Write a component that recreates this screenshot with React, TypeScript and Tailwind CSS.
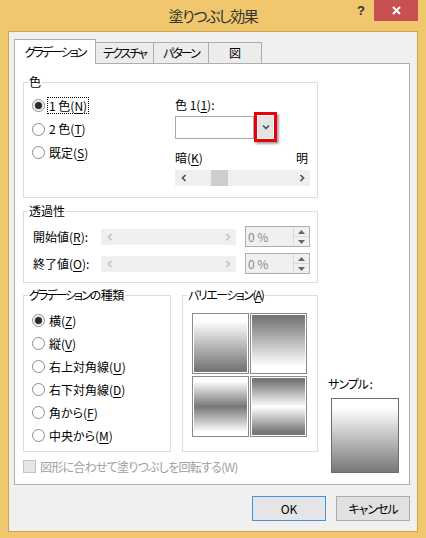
import React from 'react';

const jp = "font-['Noto_Sans_CJK_JP',sans-serif] [font-feature-settings:'palt']";

function Chevron({ dir, color = '#555' }: { dir: 'left' | 'right' | 'down' | 'up'; color?: string }) {
  const pts: Record<string, string> = {
    left: '4.5,1 1.5,4 4.5,7',
    right: '1.5,1 4.5,4 1.5,7',
    down: '1,1.5 4,4.5 7,1.5',
    up: '1,4.5 4,1.5 7,4.5',
  };
  const horiz = dir === 'left' || dir === 'right';
  return (
    <svg width={horiz ? 6 : 8} height={horiz ? 8 : 6} viewBox={horiz ? '0 0 6 8' : '0 0 8 6'}>
      <polyline points={pts[dir]} fill="none" stroke={color} strokeWidth="1.7" />
    </svg>
  );
}

function GroupBox({ label, className, children }: { label: React.ReactNode; className: string; children?: React.ReactNode }) {
  return (
    <div className={`relative border border-[#dcdcdc] ${className}`}>
      <span className="absolute left-[4px] -top-[9px] bg-white px-[1px] leading-[16px] whitespace-nowrap">{label}</span>
      {children}
    </div>
  );
}

function Radio({ checked, focus, children, h = 'h-[23px]' }: { checked?: boolean; focus?: boolean; children: React.ReactNode; h?: string }) {
  return (
    <div className={`flex items-center ${h}`}>
      <span className="w-[13px] h-[13px] rounded-full border border-[#8a8a8a] bg-white flex items-center justify-center shrink-0">
        {checked && <span className="w-[7px] h-[7px] rounded-full bg-[#2a2a2a] ring-1 ring-[#d8d8d8]" />}
      </span>
      {focus ? (
        <span className="ml-[2px] px-[1px] border border-dotted border-black leading-[15px]">{children}</span>
      ) : (
        <span className="ml-[4px] leading-[16px] whitespace-nowrap">{children}</span>
      )}
    </div>
  );
}

function U({ children }: { children: React.ReactNode }) {
  return <span className="underline underline-offset-2">{children}</span>;
}

function ScrollBar({ disabled }: { disabled?: boolean }) {
  const c = disabled ? '#c2c2c2' : '#555';
  return (
    <div className="w-[135px] h-[16px] bg-[#efefef] flex items-center">
      <div className="w-[17px] h-full flex items-center justify-center">
        <Chevron dir="left" color={c} />
      </div>
      <div className="flex-1 h-full">
        {!disabled && <div className="ml-[19px] w-[17px] h-full bg-[#cdcdcd]" />}
      </div>
      <div className="w-[17px] h-full flex items-center justify-center">
        <Chevron dir="right" color={c} />
      </div>
    </div>
  );
}

function Spin() {
  return (
    <div className="ml-[9px] w-[65px] h-[21px] border border-[#adadad] bg-[#f0f0f0] flex">
      <div className="flex-1 pl-[2px] flex items-center text-[#8b8b8b] leading-[16px]">0 %</div>
      <div className="w-[16px] flex flex-col border-l border-[#dadada]">
        <div className="flex-1 flex items-center justify-center border-b border-[#dadada]">
          <svg width="7" height="4" viewBox="0 0 7 4"><polygon points="0,4 3.5,0 7,4" fill="#666" /></svg>
        </div>
        <div className="flex-1 flex items-center justify-center">
          <svg width="7" height="4" viewBox="0 0 7 4"><polygon points="0,0 3.5,4 7,0" fill="#666" /></svg>
        </div>
      </div>
    </div>
  );
}

function Variant({ bg }: { bg: string }) {
  return (
    <div className="h-[61px] border border-[#8a8a8a] bg-white p-[1px]">
      <div className={`w-full h-full ${bg}`} />
    </div>
  );
}

export default function App() {
  return (
    <div className={`w-[426px] h-[538px] bg-[#f0c76c] flex flex-col text-[12px] text-black ${jp}`}>
      {/* title bar */}
      <div className="relative h-[31px] flex items-center justify-center">
        <span className="text-[15px] text-[#333] leading-[20px] tracking-[-1.4px]">塗りつぶし効果</span>
        <div className="absolute top-0 right-[8px] flex">
          <div className="w-[26px] h-[21px] flex items-center justify-center text-[13px] font-bold text-[#333] font-['Liberation_Sans',sans-serif]">?</div>
          <div className="w-[44px] h-[21px] bg-[#c75050] flex items-center justify-center">
            <svg width="9" height="9" viewBox="0 0 9 9">
              <path d="M1 1 L8 8 M8 1 L1 8" stroke="#fff" strokeWidth="2" />
            </svg>
          </div>
        </div>
      </div>

      {/* client area */}
      <div className="mx-[8px] h-[501px] border border-[#c9a54f] bg-[#f0f0f0]">
        {/* tabs */}
        <div className="flex items-end h-[24px] ml-[5px] mt-[7px] tracking-[-2px]">
          <div className="relative z-10 -mb-px h-[25px] w-[82px] border border-b-0 border-[#adadad] bg-white flex items-center justify-center">
            グラデーション
          </div>
          <div className="-ml-px h-[21px] w-[59px] border border-b-0 border-[#adadad] bg-[#ececec] flex items-center justify-center">テクスチャ</div>
          <div className="-ml-px h-[21px] w-[56px] border border-b-0 border-[#adadad] bg-[#ececec] flex items-center justify-center">パターン</div>
          <div className="-ml-px h-[21px] w-[54px] border border-b-0 border-[#adadad] bg-[#ececec] flex items-center justify-center tracking-normal">図</div>
        </div>

        {/* panel */}
        <div className="ml-[5px] w-[396px] h-[422px] border border-[#adadad] bg-white pl-[8px] pt-[18px]">
          <div className="flex items-end">
            <div className="w-[295px]">
              {/* color */}
              <GroupBox label="色" className="h-[116px] flex">
                <div className="w-[151px] pl-[8px] pt-[11px]">
                  <Radio checked focus h="h-[23.5px]">1 色(<U>N</U>)</Radio>
                  <Radio h="h-[23.5px]">2 色(<U>T</U>)</Radio>
                  <Radio h="h-[23.5px]">既定(<U>S</U>)</Radio>
                </div>
                <div className="pt-[14px] w-[135px]">
                  <div className="leading-[16px]">色 1(<U>1</U>):</div>
                  <div className="-mt-px h-[30px] flex items-center">
                    <div className="w-[79px] h-[23px] border border-[#a9a9a9] bg-white" />
                    <div className="w-[23px] h-[30px] border-[3px] border-[#e8000b] shadow-[2px_2px_2px_rgba(0,0,0,0.35)] bg-[#e4e4e4] flex items-center justify-center">
                      <div className="w-full h-full border border-[#f7f7f7] flex items-center justify-center">
                        <Chevron dir="down" color="#555" />
                      </div>
                    </div>
                  </div>
                  <div className="mt-[8px] leading-[16px] flex justify-between pr-[2px]">
                    <span>暗(<U>K</U>)</span>
                    <span>明</span>
                  </div>
                  <div className="mt-[4px]">
                    <ScrollBar />
                  </div>
                </div>
              </GroupBox>

              {/* transparency */}
              <GroupBox label="透過性" className="mt-[13px] h-[72px] pl-[9px] pt-[14px]">
                <div className="h-[21px] flex items-center">
                  <span className="w-[68px] leading-[16px]">開始値(<U>R</U>):</span>
                  <ScrollBar disabled />
                  <Spin />
                </div>
                <div className="mt-[6px] h-[21px] flex items-center">
                  <span className="w-[68px] leading-[16px]">終了値(<U>O</U>):</span>
                  <ScrollBar disabled />
                  <Spin />
                </div>
              </GroupBox>

              <div className="mt-[12px] flex">
                <GroupBox
                  label={<><span className="tracking-[-2px]">グラデーション</span><span className="tracking-[-0.5px]">の種類</span></>}
                  className="w-[148px] h-[157px] pl-[8px] pt-[13px]"
                >
                  <Radio checked>横(<U>Z</U>)</Radio>
                  <Radio>縦(<U>V</U>)</Radio>
                  <Radio>右上対角線(<U>U</U>)</Radio>
                  <Radio>右下対角線(<U>D</U>)</Radio>
                  <Radio>角から(<U>F</U>)</Radio>
                  <Radio>中央から(<U>M</U>)</Radio>
                </GroupBox>
                <GroupBox label={<span className="tracking-[-1.5px]">バリエーション(<U>A</U>)</span>} className="ml-[11px] w-[136px] h-[157px] pl-[9px] pt-[17px]">
                  <div className="grid grid-cols-[57px_57px] gap-x-[1px] gap-y-[2px]">
                    <Variant bg="bg-[linear-gradient(to_bottom,#ffffff_10%,#777777_95%)]" />
                    <Variant bg="bg-[linear-gradient(to_bottom,#777777_5%,#ffffff_90%)]" />
                    <Variant bg="bg-[linear-gradient(to_bottom,#ffffff_5%,#777777_50%,#ffffff_95%)]" />
                    <Variant bg="bg-[linear-gradient(to_bottom,#777777_5%,#ffffff_50%,#777777_95%)]" />
                  </div>
                </GroupBox>
              </div>

              <div className="mt-[8px] h-[13px] flex items-center">
                <span className="w-[13px] h-[13px] border border-[#c3c3c3] bg-[#e6e6e6] shrink-0" />
                <span className="ml-[4px] leading-[16px] text-[#a0a0a0] whitespace-nowrap tracking-[-0.75px]">図形に合わせて塗りつぶしを回転する(W)</span>
              </div>
            </div>

            {/* sample */}
            <div className="ml-[13px]">
              <div className="-ml-[3px] leading-[16px] tracking-[-1px]">サンプル :</div>
              <div className="mt-[6px] w-[68px] h-[75px] border border-[#6d6d6d] bg-[linear-gradient(to_bottom,#ffffff_12%,#777777_100%)]" />
            </div>
          </div>
        </div>

        {/* buttons */}
        <div className="mt-[11px] pr-[7px] flex justify-end gap-[10px]">
          <button className="w-[74px] h-[25px] border border-[#3d95e0] bg-[#e5e5e5] flex items-center justify-center">OK</button>
          <button className="w-[74px] h-[25px] border border-[#adadad] bg-[#e1e1e1] flex items-center justify-center tracking-[-1px]">キャンセル</button>
        </div>
      </div>
    </div>
  );
}
